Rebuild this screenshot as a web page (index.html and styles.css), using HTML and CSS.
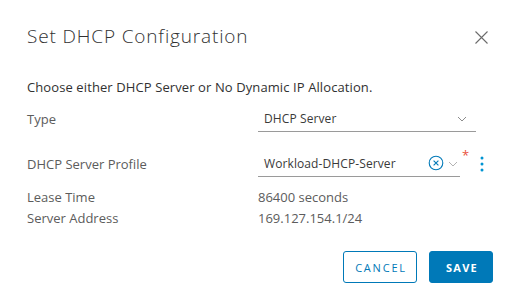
FILE: index.html
```html
<!DOCTYPE html>
<html>
<head>
<meta charset="utf-8">
<link rel="stylesheet" href="styles.css">
</head>
<body>
<div class="modal">
  <div class="header">
    <h1 class="title">Set DHCP Configuration</h1>
    <button class="close" aria-label="Close">
      <svg width="13" height="13" viewBox="0 0 13 13"><path d="M0.5 0.5 L12.5 12.5 M12.5 0.5 L0.5 12.5" stroke="#6b6b6b" stroke-width="1.1" fill="none"/></svg>
    </button>
  </div>
  <p class="intro">Choose either DHCP Server or No Dynamic IP Allocation.</p>
  <div class="form">
    <div class="row row-type">
      <div class="label">Type</div>
      <div class="field">
        <div class="select wide">
          <span class="val">DHCP Server</span>
          <svg class="chev" width="10" height="6" viewBox="0 0 10 6"><path d="M1 1 L5 5 L9 1" stroke="#8c8c8c" stroke-width="1" fill="none"/></svg>
        </div>
      </div>
    </div>
    <div class="row row-profile">
      <div class="label">DHCP Server Profile</div>
      <div class="field">
        <div class="select narrow">
          <span class="val">Workload-DHCP-Server</span>
          <svg class="clear" width="16" height="16" viewBox="0 0 16 16"><circle cx="8" cy="8" r="6.8" stroke="#0079b8" stroke-width="1.1" fill="none"/><path d="M5.6 5.6 L10.4 10.4 M10.4 5.6 L5.6 10.4" stroke="#0079b8" stroke-width="1.1"/></svg>
          <svg class="chev" width="10" height="6" viewBox="0 0 10 6"><path d="M1 1 L5 5 L9 1" stroke="#b3b3b3" stroke-width="1" fill="none"/></svg>
        </div>
        <span class="req">*</span>
        <svg class="kebab" width="4" height="16" viewBox="0 0 4 16"><circle cx="2" cy="2" r="1.5" fill="#0094d2"/><circle cx="2" cy="8" r="1.5" fill="#0094d2"/><circle cx="2" cy="14" r="1.5" fill="#0094d2"/></svg>
      </div>
    </div>
    <div class="row row-static">
      <div class="label">Lease Time</div>
      <div class="value">86400 seconds</div>
    </div>
    <div class="row row-static">
      <div class="label">Server Address</div>
      <div class="value">169.127.154.1/24</div>
    </div>
  </div>
  <div class="footer">
    <button class="btn btn-outline">CANCEL</button>
    <button class="btn btn-primary">SAVE</button>
  </div>
</div>
</body>
</html>
```
FILE: styles.css
```css
html, body {
  margin: 0;
  padding: 0;
  background: #ffffff;
}
body {
  width: 518px;
  height: 297px;
  overflow: hidden;
  font-family: "Open Sans", "Liberation Sans", sans-serif;
}
.modal {
  box-sizing: border-box;
  width: 518px;
  height: 297px;
  background: #fff;
  padding: 0 25px 0 27px;
  display: flex;
  flex-direction: column;
}
.header {
  display: flex;
  justify-content: space-between;
  align-items: center;
  height: 74px;
}
.title {
  margin: 0;
  margin-top: -2px;
  font-size: 19px;
  font-weight: 300;
  color: #313131;
  letter-spacing: 0.85px;
}
.close {
  border: 0;
  background: none;
  padding: 0;
  width: 13px;
  height: 13px;
  margin-right: 5px;
  display: flex;
}
.intro {
  margin: 5px 0 0 0;
  font-size: 13px;
  color: #313131;
  line-height: 16px;
  letter-spacing: 0.1px;
}
.form {
  margin-top: 11px;
  display: flex;
  flex-direction: column;
}
.row {
  display: flex;
  align-items: center;
  font-size: 13px;
  color: #5c5c5c;
}
.label {
  width: 231px;
}
.row-type { height: 26px; }
.row-profile { height: 26px; margin-top: 19px; }
.row-static { height: 21px; }
.row-profile + .row-static { margin-top: 9px; }
.field {
  display: flex;
  align-items: center;
}
.select {
  box-sizing: border-box;
  height: 26px;
  border-bottom: 1px solid #9a9a9a;
  display: flex;
  align-items: center;
  padding-left: 6px;
  color: #3a3a3a;
  font-size: 12px;
  letter-spacing: 0.1px;
}
.select.wide { width: 218px; }
.select.narrow { width: 202px; }
.val { flex: 1; }
.chev { margin-right: 9px; }
.select.narrow .chev { margin-right: 2px; margin-left: 4px; }
.clear { margin-top: -2px; }
.req {
  color: #e9523c;
  font-size: 13px;
  align-self: flex-start;
  margin-left: 2px;
  margin-top: -3px;
  line-height: 14px;
}
.kebab {
  margin-left: 11px;
  margin-top: -1px;
}
.value { color: #5c5c5c; }
.footer {
  margin-top: auto;
  margin-bottom: 14px;
  display: flex;
  justify-content: flex-end;
  gap: 12px;
}
.btn {
  box-sizing: border-box;
  height: 32px;
  border-radius: 3px;
  font-family: "Open Sans", "Liberation Sans", sans-serif;
  font-size: 11px;
  letter-spacing: 1.8px;
  padding: 0 0 0 2px;
}
.btn-outline {
  width: 74px;
  background: #fff;
  border: 1px solid #0079b8;
  color: #0079b8;
  font-weight: 500;
}
.btn-primary {
  width: 64px;
  background: #0079b8;
  border: 1px solid #0079b8;
  color: #fff;
  font-weight: 700;
  letter-spacing: 1.3px;
}
```
